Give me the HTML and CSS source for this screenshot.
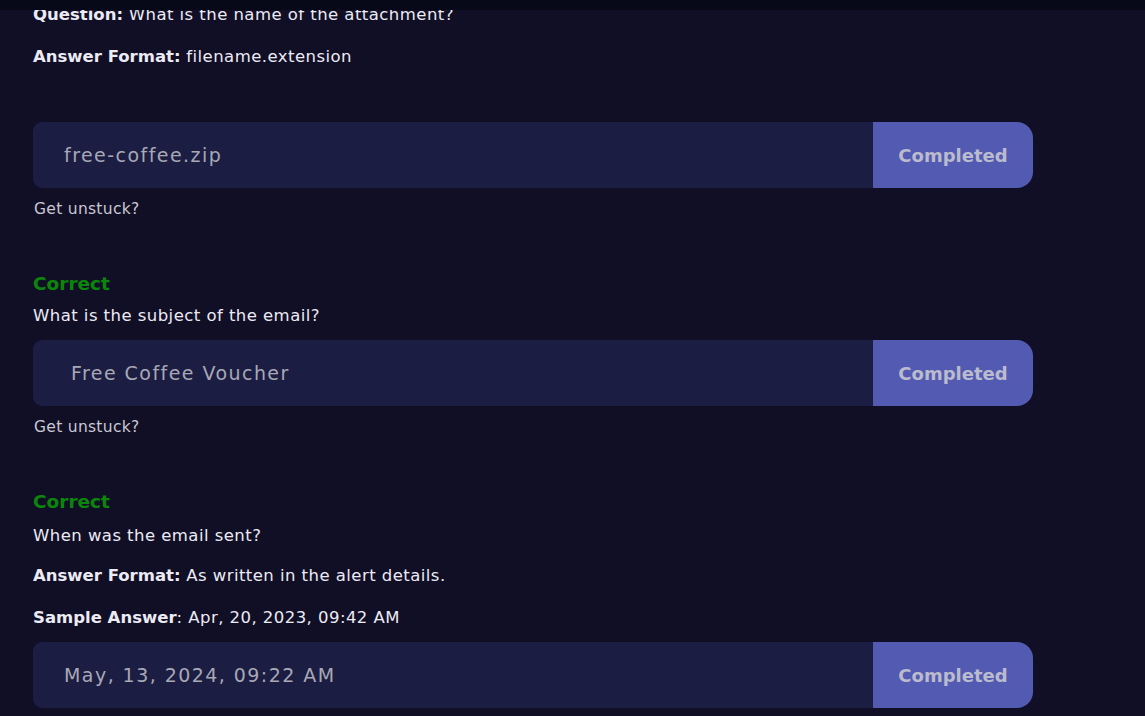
FILE: index.html
```html
<!DOCTYPE html>
<html>
<head>
<meta charset="utf-8">
<link rel="stylesheet" href="styles.css">
</head>
<body>
<div class="topbar"></div>
<main class="content">
  <section class="task first">
    <p class="line q-top"><b>Question:</b> What is the name of the attachment?</p>
    <p class="line"><b>Answer Format:</b> filename.extension</p>
    <div class="answer spaced">
      <div class="field">free-coffee.zip</div>
      <div class="btn">Completed</div>
    </div>
    <div class="hint">Get unstuck?</div>
  </section>
  <section class="task">
    <div class="correct">Correct</div>
    <p class="line tight">What is the subject of the email?</p>
    <div class="answer gap8">
      <div class="field indent">Free Coffee Voucher</div>
      <div class="btn">Completed</div>
    </div>
    <div class="hint">Get unstuck?</div>
  </section>
  <section class="task">
    <div class="correct">Correct</div>
    <p class="line tight2">When was the email sent?</p>
    <p class="line"><b>Answer Format:</b> As written in the alert details.</p>
    <p class="line"><b>Sample Answer</b>: Apr, 20, 2023, 09:42 AM</p>
    <div class="answer near">
      <div class="field">May, 13, 2024, 09:22 AM</div>
      <div class="btn">Completed</div>
    </div>
  </section>
</main>
</body>
</html>
```
FILE: styles.css
```css
html, body {
  margin: 0;
  padding: 0;
  background: #110f26;
  height: 716px;
  overflow: hidden;
}
body {
  font-family: "DejaVu Sans", sans-serif;
  color: #ecebf4;
  position: relative;
}
.topbar {
  position: absolute;
  top: 0;
  left: 0;
  right: 0;
  height: 10px;
  background: #070818;
  z-index: 2;
}
.content {
  padding-left: 33px;
  width: 1000px;
}
.task {
  display: flex;
  flex-direction: column;
}
.line {
  margin: 0;
  font-size: 16.5px;
  height: 42px;
  line-height: 42px;
  letter-spacing: 0.45px;
}
.line b {
  font-weight: 700;
  letter-spacing: 0;
}
.q-top {
  margin-top: -6px;
}
.tight {
  height: 32px;
  line-height: 32px;
}
.tight2 {
  height: 35px;
  line-height: 32px;
  padding-top: 2px;
}
.spaced {
  margin-top: 44px;
}
.gap8 {
  margin-top: 8px;
}
.near {
  margin-top: 3px;
}
.answer {
  display: flex;
  height: 66px;
}
.field {
  flex: 1;
  background: #1c1d42;
  border-radius: 9px 0 0 9px;
  display: flex;
  align-items: center;
  padding-left: 31px;
  font-size: 19px;
  color: #a8a8b6;
  letter-spacing: 1.45px;
}
.field.indent {
  padding-left: 38px;
}
.btn {
  width: 160px;
  background: #535ab2;
  border-radius: 0 16px 16px 0;
  display: flex;
  align-items: center;
  justify-content: center;
  font-size: 18px;
  font-weight: 700;
  color: #babbcd;
}
.hint {
  font-size: 15.5px;
  letter-spacing: 0.3px;
  color: #c9c8d3;
  padding-left: 1px;
  height: 42px;
  line-height: 42px;
  margin-bottom: 38px;
}
.correct {
  color: #0a870a;
  font-weight: 700;
  font-size: 18.5px;
  height: 32px;
  line-height: 32px;
}
```
